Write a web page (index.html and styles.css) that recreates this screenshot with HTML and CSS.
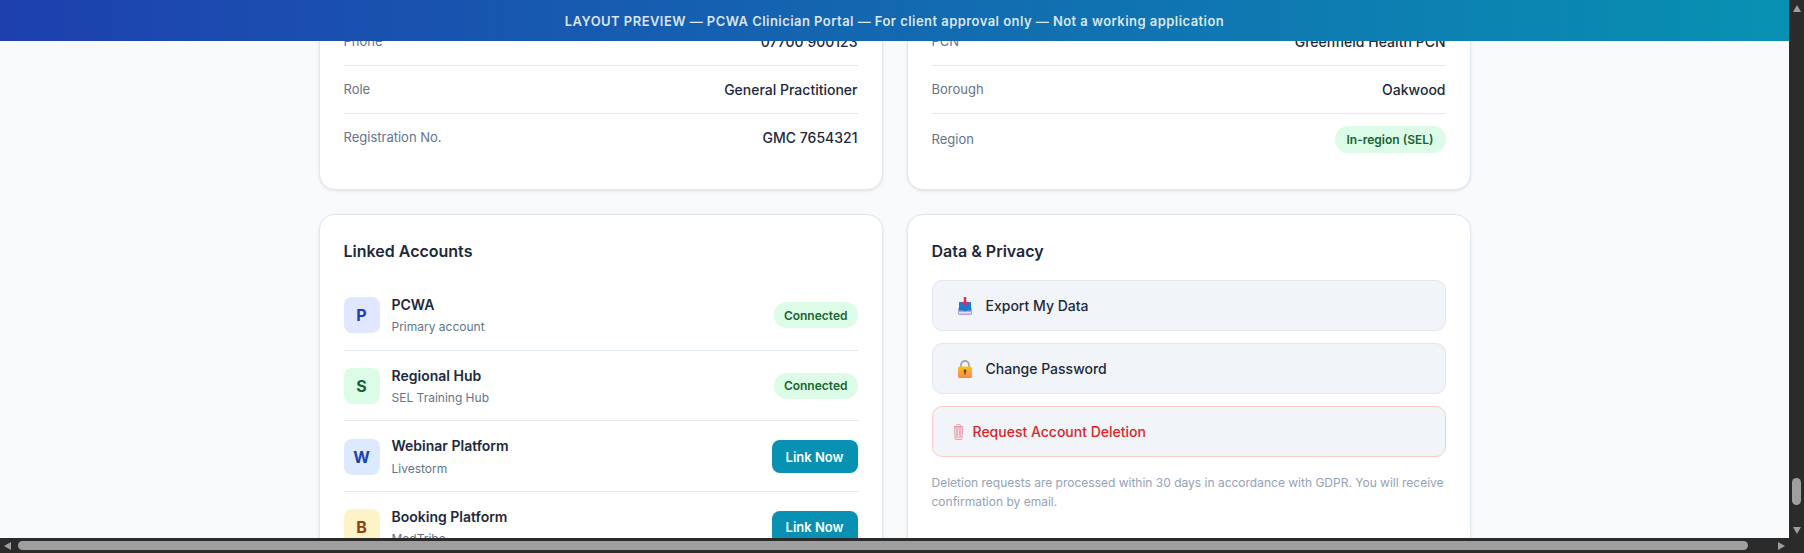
FILE: index.html
```html
<!DOCTYPE html>
<html lang="en">
<head>
    <meta charset="UTF-8">
    <meta name="viewport" content="width=device-width, initial-scale=1.0">
    <title>PCWA Clinician Portal - Profile</title>
    <link rel="stylesheet" href="styles.css">
</head>
<body>
    <div class="viewport">
        <div class="preview-banner">LAYOUT PREVIEW — PCWA Clinician Portal — For client approval only — Not a working application</div>

        <main class="content">
            <section class="card">
                <div class="info-row"><span class="info-label">Phone</span><span class="info-value">07700 900123</span></div>
                <div class="info-row"><span class="info-label">Role</span><span class="info-value">General Practitioner</span></div>
                <div class="info-row"><span class="info-label">Registration No.</span><span class="info-value">GMC 7654321</span></div>
            </section>

            <section class="card">
                <div class="info-row"><span class="info-label">PCN</span><span class="info-value">Greenfield Health PCN</span></div>
                <div class="info-row"><span class="info-label">Borough</span><span class="info-value">Oakwood</span></div>
                <div class="info-row info-row-center"><span class="info-label">Region</span><span class="pill pill-region">In-region (SEL)</span></div>
            </section>

            <section class="card">
                <h2 class="card-title">Linked Accounts</h2>
                <div class="account-row">
                    <div class="account-icon icon-indigo">P</div>
                    <div class="account-info">
                        <div class="account-name">PCWA</div>
                        <div class="account-sub">Primary account</div>
                    </div>
                    <span class="pill">Connected</span>
                </div>
                <div class="account-row">
                    <div class="account-icon icon-green">S</div>
                    <div class="account-info">
                        <div class="account-name">Regional Hub</div>
                        <div class="account-sub">SEL Training Hub</div>
                    </div>
                    <span class="pill">Connected</span>
                </div>
                <div class="account-row">
                    <div class="account-icon icon-blue">W</div>
                    <div class="account-info">
                        <div class="account-name">Webinar Platform</div>
                        <div class="account-sub">Livestorm</div>
                    </div>
                    <button class="link-btn">Link Now</button>
                </div>
                <div class="account-row">
                    <div class="account-icon icon-amber">B</div>
                    <div class="account-info">
                        <div class="account-name">Booking Platform</div>
                        <div class="account-sub">MedTribe</div>
                    </div>
                    <button class="link-btn">Link Now</button>
                </div>
            </section>

            <section class="card">
                <h2 class="card-title">Data &amp; Privacy</h2>
                <button class="action-btn">
                    <svg class="action-icon" width="24" height="18" viewBox="0 0 24 18" xmlns="http://www.w3.org/2000/svg">
                        <path d="M5 11 L19 11 L19 16.5 Q19 18 17.5 18 L6.5 18 Q5 18 5 16.5 Z" fill="#b9a5da"/>
                        <rect x="6" y="15" width="12" height="1.5" fill="#e6def2"/>
                        <path d="M6.5 5 L17.5 5 Q18 5 18 5.5 L18 13.5 L14.5 13.5 Q12 15 9.5 13.5 L6 13.5 L6 5.5 Q6 5 6.5 5 Z" fill="#1b7bcf"/>
                        <path d="M10.7 0 L13.3 0 L13.3 5 L15.7 5 L12 9.5 L8.3 5 L10.7 5 Z" fill="#dd2e63"/>
                    </svg>
                    Export My Data
                </button>
                <button class="action-btn">
                    <svg class="action-icon" width="24" height="18" viewBox="0 0 24 18" xmlns="http://www.w3.org/2000/svg">
                        <defs>
                            <linearGradient id="lock-body" x1="0" y1="0" x2="0" y2="1">
                                <stop offset="0" stop-color="#fcc21b"/>
                                <stop offset="1" stop-color="#f7894a"/>
                            </linearGradient>
                        </defs>
                        <path d="M8 7 L8 5 A4 4 0 0 1 16 5 L16 7" fill="none" stroke="#a7a3b5" stroke-width="1.8"/>
                        <rect x="5" y="6.5" width="14" height="11.5" rx="1.5" fill="url(#lock-body)"/>
                        <circle cx="12" cy="11" r="1.4" fill="#5b3a1e"/>
                        <rect x="11.4" y="11" width="1.2" height="3.5" fill="#5b3a1e"/>
                    </svg>
                    Change Password
                </button>
                <button class="action-btn action-danger">
                    <svg class="action-icon" width="11" height="16" viewBox="0 0 11 16" xmlns="http://www.w3.org/2000/svg">
                        <rect x="3.5" y="0.5" width="4" height="2" rx="1" fill="none" stroke="#e8a0ad" stroke-width="1"/>
                        <rect x="0.5" y="2" width="10" height="1.5" rx="0.7" fill="#e8a0ad"/>
                        <path d="M1.5 4 L9.5 4 L9 15 Q9 15.5 8.5 15.5 L2.5 15.5 Q2 15.5 2 15 Z" fill="#fbe3e6" stroke="#e8a0ad" stroke-width="1"/>
                        <path d="M4 5 L4 14 M7 5 L7 14" stroke="#e07f92" stroke-width="1"/>
                    </svg>
                    Request Account Deletion
                </button>
                <p class="privacy-note">Deletion requests are processed within 30 days in accordance with GDPR. You will receive confirmation by email.</p>
            </section>
        </main>
    </div>

    <!-- Browser scrollbars, as they show in the screenshot -->
    <div class="scrollbar-v">
        <span class="arrow arrow-up"></span>
        <span class="thumb-v"></span>
        <span class="arrow arrow-down"></span>
    </div>
    <div class="scrollbar-h">
        <span class="arrow arrow-left"></span>
        <span class="thumb-h"></span>
        <span class="arrow arrow-right"></span>
    </div>
    <div class="scrollbar-corner"></div>
</body>
</html>
```

FILE: styles.css
```css
* {
    box-sizing: border-box;
}

body {
    margin: 0;
    height: 553px;
    overflow: hidden;
    display: grid;
    grid-template-columns: 1fr 15px;
    grid-template-rows: 1fr 15px;
    background: #f8fafc;
    color: #1e293b;
    font-family: 'Inter', sans-serif;
}

.viewport {
    position: relative;
    overflow: hidden;
}

.preview-banner {
    position: absolute;
    top: 0;
    left: 0;
    right: 0;
    z-index: 10;
    height: 41px;
    display: flex;
    align-items: center;
    justify-content: center;
    background: linear-gradient(90deg, #1e40af, #0891b2);
    color: rgba(255, 255, 255, 0.85);
    font-size: 13px;
    font-weight: 600;
    letter-spacing: 0.45px;
}

/* page is scrolled, so the first cards start above the top edge */
.content {
    width: 1152px;
    margin: -7px auto 0;
    display: grid;
    grid-template-columns: 1fr 1fr;
    gap: 24px;
}

.card {
    background: white;
    border: 1px solid #e2e8f0;
    border-radius: 16px;
    padding: 24px;
    box-shadow: 0 1px 3px rgba(0, 0, 0, 0.1);
}

.card-title {
    margin: 0 0 17px;
    font-size: 16px;
    font-weight: 600;
    line-height: 24px;
}

.info-row {
    display: flex;
    justify-content: space-between;
    align-items: flex-start;
    padding: 12px 0;
    line-height: 23px;
    border-bottom: 1px solid #e2e8f0;
}

.info-row:last-child {
    border-bottom: none;
}

.info-row-center {
    align-items: center;
}

.info-label {
    font-size: 13px;
    color: #64748b;
}

.info-value {
    font-size: 14px;
    font-weight: 500;
}

.pill {
    padding: 0 10px;
    height: 26px;
    display: inline-flex;
    align-items: center;
    border-radius: 13px;
    background: #dcfce7;
    color: #166534;
    font-size: 12px;
    font-weight: 600;
}

.pill-region {
    padding: 0 12px;
    height: 27px;
    border-radius: 14px;
}

.account-row {
    display: flex;
    align-items: center;
    gap: 12px;
    padding: 14px 0 13px;
    border-bottom: 1px solid #e2e8f0;
}

.account-row:last-child {
    border-bottom: none;
}

.account-icon {
    width: 36px;
    height: 36px;
    flex-shrink: 0;
    display: flex;
    align-items: center;
    justify-content: center;
    border-radius: 8px;
    font-size: 16px;
    font-weight: 700;
}

.icon-indigo { background: #e0e7ff; color: #1e40af; }
.icon-green { background: #dcfce7; color: #166534; }
.icon-blue { background: #dbeafe; color: #1e40af; }
.icon-amber { background: #fef3c7; color: #92400e; }

.account-info {
    flex: 1;
}

.account-name {
    font-size: 14px;
    font-weight: 600;
    line-height: 22.4px;
}

.account-sub {
    margin-top: 1px;
    font-size: 12px;
    line-height: 19.2px;
    color: #64748b;
}

.link-btn {
    height: 33px;
    padding: 0 14px;
    border: none;
    border-radius: 8px;
    background: #0891b2;
    color: white;
    font-family: inherit;
    font-size: 13px;
    font-weight: 600;
}

.action-btn {
    width: 100%;
    height: 51px;
    margin-bottom: 12px;
    padding: 0 20px;
    display: flex;
    align-items: center;
    gap: 9px;
    border: 1px solid #e2e8f0;
    border-radius: 10px;
    background: #f1f5f9;
    color: #1e293b;
    font-family: inherit;
    font-size: 14px;
    font-weight: 500;
}

.action-icon {
    flex-shrink: 0;
}

.action-danger {
    border-color: #fecaca;
    color: #dc2626;
}

.privacy-note {
    margin: 16px 0 0;
    font-size: 12px;
    line-height: 19.2px;
    color: #94a3b8;
}

.scrollbar-v {
    display: flex;
    flex-direction: column;
    align-items: center;
    padding: 5px 0 4px;
    background: #2b2b2b;
}

.thumb-v {
    width: 9px;
    height: 27px;
    margin-top: 466px;
    border-radius: 5px;
    background: #9f9f9f;
}

.scrollbar-h {
    display: flex;
    align-items: center;
    padding: 0 4px;
    background: #2b2b2b;
}

.thumb-h {
    width: 1730px;
    height: 9px;
    margin-left: 7px;
    border-radius: 5px;
    background: #9f9f9f;
}

.scrollbar-corner {
    background: #2b2b2b;
}

.arrow {
    width: 0;
    height: 0;
    flex-shrink: 0;
    border-style: solid;
    border-color: transparent;
}

.arrow-up {
    border-width: 0 4.5px 7px;
    border-bottom-color: #9f9f9f;
}

.arrow-down {
    margin-top: auto;
    border-width: 7px 4.5px 0;
    border-top-color: #9f9f9f;
}

.arrow-left {
    border-width: 4.5px 7px 4.5px 0;
    border-right-color: #9f9f9f;
}

.arrow-right {
    margin-left: auto;
    border-width: 4.5px 0 4.5px 7px;
    border-left-color: #9f9f9f;
}
```
